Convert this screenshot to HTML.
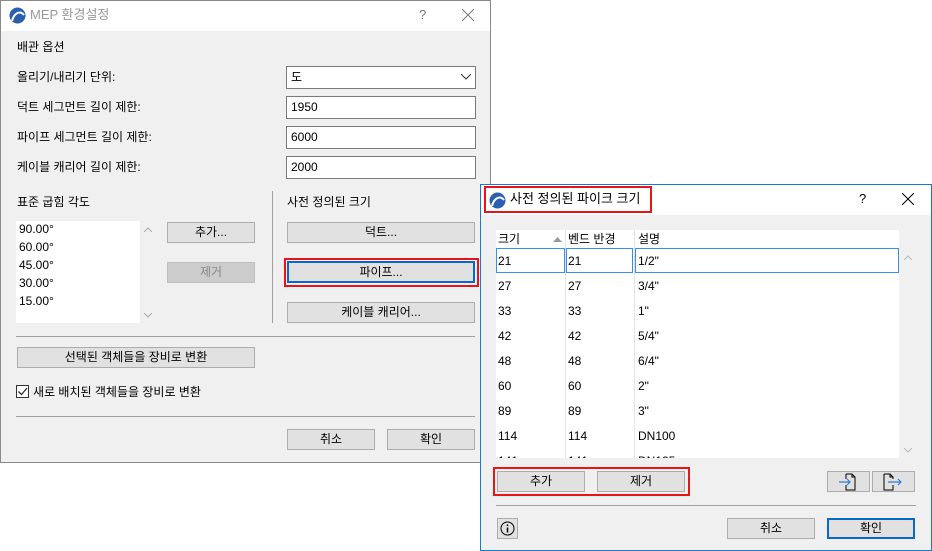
<!DOCTYPE html>
<html><head><meta charset="utf-8"><style>
*{box-sizing:border-box;margin:0;padding:0}
body{width:932px;height:551px;background:#fff;position:relative;overflow:hidden;font-family:"Liberation Sans","Noto Sans CJK KR","NanumGothic",sans-serif;font-size:12px;color:#000}
.a{position:absolute}
.t{position:absolute;white-space:nowrap;line-height:14px}
.btn{position:absolute;background:#e1e1e1;border:1px solid #adadad;text-align:center;line-height:18px;font-size:12px}
.inp{position:absolute;background:#fff;border:1px solid #7a7a7a;height:23px;line-height:21px;padding-left:4px}
.hr{position:absolute;height:1px;background:#a0a0a0}
.cell{position:absolute;line-height:14px}
</style></head><body>

<!-- main dialog -->
<div class="a" style="left:0;top:0;width:491px;height:463px;background:#f0f0f0;border:1px solid #8a8a8a"></div>
<div class="a" style="left:1px;top:1px;width:489px;height:30px;background:#fff"></div>
<svg class="a" style="left:9px;top:7px" width="17" height="17" viewBox="0 0 17 17"><circle cx="8.5" cy="8.5" r="8" fill="#2b5fb0"/><path d="M3 14 C5 6,11 3,15 8" stroke="#fff" stroke-width="2" fill="none"/></svg>
<div class="t" style="left:30px;top:8px;color:#999;font-size:13px">MEP 환경설정</div>
<div class="t" style="left:419px;top:8px;color:#777;font-size:13px">?</div>
<svg class="a" style="left:462px;top:9px" width="12" height="12"><path d="M0 0L12 12M12 0L0 12" stroke="#777" stroke-width="1"/></svg>

<div class="t" style="left:17px;top:40px">배관 옵션</div>
<div class="t" style="left:17px;top:70px">올리기/내리기 단위:</div>
<div class="t" style="left:17px;top:100px">덕트 세그먼트 길이 제한:</div>
<div class="t" style="left:17px;top:130px">파이프 세그먼트 길이 제한:</div>
<div class="t" style="left:17px;top:160px">케이블 캐리어 길이 제한:</div>
<div class="inp" style="left:286px;top:66px;width:190px">도</div>
<svg class="a" style="left:461px;top:74px" width="10" height="6"><path d="M0 0L5 5L10 0" stroke="#333" fill="none"/></svg>
<div class="inp" style="left:286px;top:96px;width:190px">1950</div>
<div class="inp" style="left:286px;top:126px;width:190px">6000</div>
<div class="inp" style="left:286px;top:156px;width:190px">2000</div>

<div class="t" style="left:17px;top:195px">표준 굽힘 각도</div>
<div class="t" style="left:287px;top:195px">사전 정의된 크기</div>
<div class="a" style="left:272px;top:191px;width:1px;height:132px;background:#a0a0a0"></div>
<div class="a" style="left:16px;top:221px;width:124px;height:102px;background:#fff"></div>
<div class="t" style="left:19px;top:222px">90.00°</div>
<div class="t" style="left:19px;top:240px">60.00°</div>
<div class="t" style="left:19px;top:258px">45.00°</div>
<div class="t" style="left:19px;top:276px">30.00°</div>
<div class="t" style="left:19px;top:294px">15.00°</div>
<svg class="a" style="left:144px;top:227px" width="8" height="5"><path d="M0 5L4 1L8 5" stroke="#aaa" fill="none"/></svg>
<svg class="a" style="left:144px;top:313px" width="8" height="5"><path d="M0 0L4 4L8 0" stroke="#aaa" fill="none"/></svg>
<div class="btn" style="left:167px;top:222px;width:88px;height:21px">추가...</div>
<div class="btn" style="left:167px;top:262px;width:88px;height:21px;background:#ccc;border-color:#bfbfbf;color:#888">제거</div>
<div class="btn" style="left:287px;top:222px;width:188px;height:21px">덕트...</div>
<div class="a" style="left:284px;top:258px;width:195px;height:29px;border:2px solid #e8141a"></div>
<div class="btn" style="left:287px;top:261px;width:188px;height:22px;border:2px solid #0a68c8;line-height:18px">파이프...</div>
<div class="btn" style="left:287px;top:302px;width:188px;height:21px">케이블 캐리어...</div>
<div class="hr" style="left:16px;top:336px;width:459px"></div>
<div class="btn" style="left:17px;top:347px;width:238px;height:21px">선택된 객체들을 장비로 변환</div>
<div class="a" style="left:16px;top:385px;width:13px;height:13px;border:1px solid #333;background:#fff"></div>
<svg class="a" style="left:17px;top:386px" width="11" height="11"><path d="M1.5 5.5L4.5 8.5L10 2" stroke="#333" stroke-width="1.3" fill="none"/></svg>
<div class="t" style="left:33px;top:385px">새로 배치된 객체들을 장비로 변환</div>
<div class="hr" style="left:16px;top:416px;width:459px"></div>
<div class="btn" style="left:287px;top:429px;width:88px;height:21px">취소</div>
<div class="btn" style="left:387px;top:429px;width:88px;height:21px">확인</div>

<!-- second dialog -->
<div class="a" style="left:480px;top:184px;width:452px;height:367px;background:#f0f0f0;border:1px solid #1979ca"></div>
<div class="a" style="left:481px;top:185px;width:450px;height:30px;background:#fff"></div>
<div class="a" style="left:484px;top:186px;width:168px;height:27px;border:2px solid #e8141a"></div>
<svg class="a" style="left:489px;top:192px" width="17" height="17" viewBox="0 0 17 17"><circle cx="8.5" cy="8.5" r="8" fill="#2b5fb0"/><path d="M3 14 C5 6,11 3,15 8" stroke="#fff" stroke-width="2" fill="none"/></svg>
<div class="t" style="left:510px;top:192px;font-size:13px">사전 정의된 파이크 크기</div>
<div class="t" style="left:859px;top:192px;font-size:13px">?</div>
<svg class="a" style="left:902px;top:193px" width="12" height="12"><path d="M0 0L12 12M12 0L0 12" stroke="#000" stroke-width="1"/></svg>

<div class="a" style="left:496px;top:230px;width:403px;height:228px;background:#fff;overflow:hidden">
 <div class="a" style="left:69px;top:0;width:1px;height:228px;background:#e4e4e4"></div>
 <div class="a" style="left:138px;top:0;width:1px;height:228px;background:#e4e4e4"></div>
 <div class="cell" style="left:2px;top:2px">크기</div>
 <svg class="a" style="left:57px;top:7px" width="9" height="5"><path d="M0 5L4.5 0L9 5Z" fill="#999"/></svg>
 <div class="cell" style="left:72px;top:2px">벤드 반경</div>
 <div class="cell" style="left:142px;top:2px">설명</div>
 <div class="a" style="left:0;top:18px;width:69px;height:25px;border:1px solid #3b8fe0"></div>
 <div class="a" style="left:70px;top:18px;width:67px;height:25px;border:1px solid #3b8fe0"></div>
 <div class="a" style="left:139px;top:18px;width:264px;height:25px;border:1px solid #3b8fe0"></div>
 <div class="cell" style="left:2px;top:24px">21</div><div class="cell" style="left:72px;top:24px">21</div><div class="cell" style="left:142px;top:24px">1/2"</div>
 <div class="cell" style="left:2px;top:49px">27</div><div class="cell" style="left:72px;top:49px">27</div><div class="cell" style="left:142px;top:49px">3/4"</div>
 <div class="cell" style="left:2px;top:74px">33</div><div class="cell" style="left:72px;top:74px">33</div><div class="cell" style="left:142px;top:74px">1"</div>
 <div class="cell" style="left:2px;top:99px">42</div><div class="cell" style="left:72px;top:99px">42</div><div class="cell" style="left:142px;top:99px">5/4"</div>
 <div class="cell" style="left:2px;top:124px">48</div><div class="cell" style="left:72px;top:124px">48</div><div class="cell" style="left:142px;top:124px">6/4"</div>
 <div class="cell" style="left:2px;top:149px">60</div><div class="cell" style="left:72px;top:149px">60</div><div class="cell" style="left:142px;top:149px">2"</div>
 <div class="cell" style="left:2px;top:174px">89</div><div class="cell" style="left:72px;top:174px">89</div><div class="cell" style="left:142px;top:174px">3"</div>
 <div class="cell" style="left:2px;top:199px">114</div><div class="cell" style="left:72px;top:199px">114</div><div class="cell" style="left:142px;top:199px">DN100</div>
 <div class="cell" style="left:2px;top:224px">141</div><div class="cell" style="left:72px;top:224px">141</div><div class="cell" style="left:142px;top:224px">DN125</div>
</div>
<svg class="a" style="left:904px;top:255px" width="8" height="5"><path d="M0 5L4 1L8 5" stroke="#bbb" fill="none"/></svg>
<svg class="a" style="left:904px;top:448px" width="8" height="5"><path d="M0 0L4 4L8 0" stroke="#bbb" fill="none"/></svg>

<div class="a" style="left:493px;top:467px;width:197px;height:29px;border:2px solid #e8141a"></div>
<div class="btn" style="left:497px;top:471px;width:88px;height:21px">추가</div>
<div class="btn" style="left:597px;top:471px;width:88px;height:21px">제거</div>
<div class="btn" style="left:827px;top:471px;width:43px;height:21px"></div>
<div class="btn" style="left:872px;top:471px;width:43px;height:21px"></div>
<svg class="a" style="left:838px;top:473px" width="20" height="18"><path d="M8 1H14L17 4V17H8V12M8 6V1" stroke="#000" fill="none"/><path d="M14 1V4H17" stroke="#000" fill="none"/><path d="M1 9H12M9 6L12 9L9 12" stroke="#2a7de1" fill="none" stroke-width="1.2"/></svg>
<svg class="a" style="left:882px;top:473px" width="22" height="18"><path d="M2 1H8L11 4V6M11 12V17H2V1" stroke="#000" fill="none"/><path d="M8 1V4H11" stroke="#000" fill="none"/><path d="M6 9H19M16 6L19 9L16 12" stroke="#2a7de1" fill="none" stroke-width="1.2"/></svg>
<div class="hr" style="left:496px;top:505px;width:420px"></div>
<div class="btn" style="left:497px;top:518px;width:21px;height:21px"></div>
<svg class="a" style="left:500px;top:521px" width="15" height="15"><circle cx="7.5" cy="7.5" r="6.5" stroke="#000" fill="none"/><path d="M7.5 6.5V11.5" stroke="#000" stroke-width="1.5"/><circle cx="7.5" cy="4.3" r="0.9" fill="#000"/></svg>
<div class="btn" style="left:727px;top:518px;width:88px;height:21px">취소</div>
<div class="btn" style="left:827px;top:518px;width:88px;height:21px;border:2px solid #0a68c8;line-height:17px">확인</div>
</body></html>
